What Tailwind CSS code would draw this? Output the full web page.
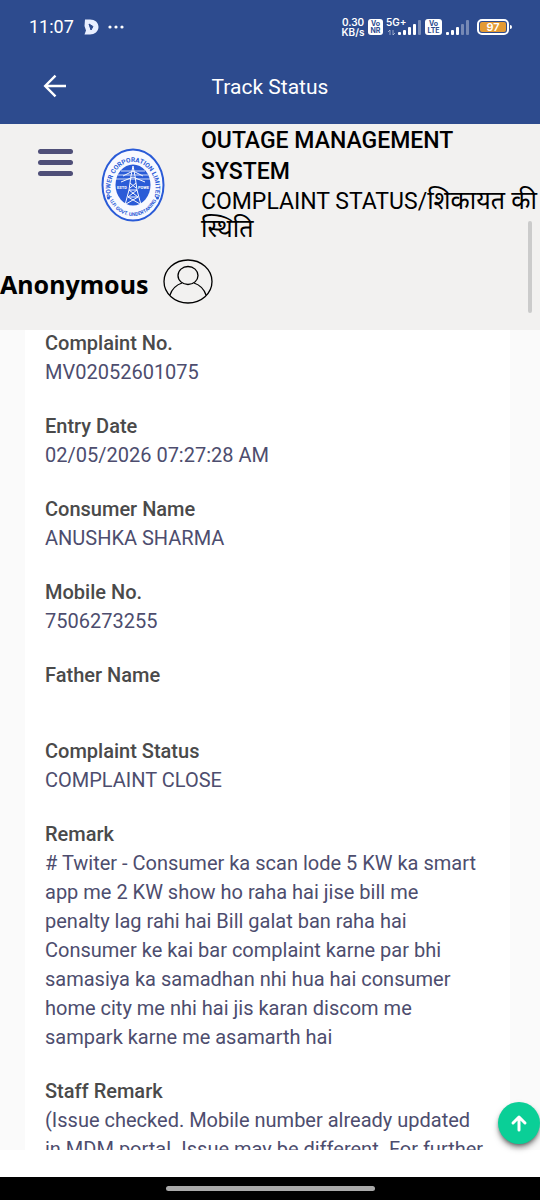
<!DOCTYPE html>
<html lang="en">
<head>
  <meta charset="UTF-8" />
  <meta name="viewport" content="width=device-width, initial-scale=1.0" />
  <title>Track Status</title>
  <script src="https://cdn.jsdelivr.net/npm/@tailwindcss/browser@4"></script>
</head>
<body class="h-screen flex flex-col overflow-hidden bg-white font-['Roboto','Noto_Sans',sans-serif]">

<!-- Phone status bar and app bar -->
<div class="bg-[#2d4b8e] text-white shrink-0">
  <div class="h-[54px] flex items-center pl-[29px] pr-7">
    <span class="text-lg">11:07</span>
    <svg class="ml-[10px] w-[15px] h-4" viewBox="0 0 15 16">
      <path d="M1 .5h5c5 0 8.500 3 8.500 7.500s-4 7.500-8.500 7.500H.5l1.500-4L.5 7z" fill="#e9efff" />
      <path d="M5 5l4 2.500L7 11l-1-3z" fill="#2d4b8e" stroke="#2d4b8e" stroke-linejoin="round" />
    </svg>
    <svg class="ml-2 w-[18px] h-1" viewBox="0 0 18 4" fill="#fff">
      <circle cx="3" cy="2" r="1.6" /><circle cx="9" cy="2" r="1.6" /><circle cx="15" cy="2" r="1.6" />
    </svg>

    <div class="ml-auto flex items-center gap-[3px] font-['Inter',sans-serif]">
      <div class="text-[10px] leading-[10px] font-semibold text-center w-6 whitespace-nowrap">0.30<br />KB/s</div>
      <div class="bg-white text-[#2d4b8e] text-[7px] leading-[7px] font-bold text-center rounded-[3px] w-[15px] h-4 pt-px">Vo<br />NR</div>
      <div class="relative w-9 h-[18px]">
        <span class="absolute left-0 -top-px text-[10px] leading-[10px] font-semibold">5G+</span>
        <svg class="w-9 h-[18px]" viewBox="0 0 36 18" fill="#fff">
          <path d="M4 17v-5l-2 2M7 12v5l2-2" fill="none" stroke="#fff" opacity=".5" />
          <rect x="12" y="14" width="3" height="3" rx="1" />
          <rect x="17" y="12" width="3" height="5" rx="1" />
          <rect x="22" y="9" width="3" height="8" rx="1" />
          <rect x="27" y="6" width="3" height="11" rx="1" />
          <rect x="32" y="2" width="3" height="15" rx="1" opacity=".35" />
        </svg>
      </div>
      <div class="bg-white text-[#2d4b8e] text-[7px] leading-[7px] font-bold text-center rounded-[3px] w-[17px] h-4 pt-px">Vo<br />LTE</div>
      <svg class="ml-px w-6 h-[18px]" viewBox="0 0 24 18" fill="#fff">
        <rect x="0" y="14" width="3" height="3" rx="1" />
        <rect x="5" y="12" width="3" height="5" rx="1" />
        <rect x="10" y="9" width="3" height="8" rx="1" />
        <rect x="15" y="6" width="3" height="11" rx="1" opacity=".35" />
        <rect x="20" y="2" width="3" height="15" rx="1" opacity=".35" />
      </svg>
      <div class="ml-1 flex items-center gap-px">
        <div class="w-8 h-4 rounded-[5px] border-2 border-white p-px">
          <div class="h-full rounded-[2px] bg-[#e39a33] flex items-center justify-center text-[11px] leading-none font-semibold">97</div>
        </div>
        <div class="w-[2px] h-1 bg-white rounded-r"></div>
      </div>
    </div>
  </div>

  <div class="h-[70px] grid grid-cols-[1fr_auto_1fr] items-start pt-4">
    <button aria-label="Back" class="ml-[43px] mt-1 w-6 h-6 justify-self-start">
      <svg class="w-6 h-6" viewBox="0 0 24 24" fill="none" stroke="#fff" stroke-width="2.4">
        <path d="M23 12H3M12.500 1.700L2.200 12l10.300 10.300" />
      </svg>
    </button>
    <h1 class="text-[21px] leading-[34px]">Track Status</h1>
  </div>
</div>

<!-- Site header -->
<header class="h-[206px] shrink-0 bg-[#f2f1f0] text-black">
  <div class="flex items-start pl-[38px]">
    <button aria-label="Menu" class="mt-[25px] w-[35px] flex flex-col gap-[6px] shrink-0">
      <span class="h-[5px] w-full rounded-full bg-[#4f4f78]"></span>
      <span class="h-[5px] w-full rounded-full bg-[#4f4f78]"></span>
      <span class="h-[5px] w-full rounded-full bg-[#4f4f78]"></span>
    </button>
    <svg class="ml-7 mt-6 w-16 h-[74px] shrink-0" viewBox="0 0 64 74" fill="none" stroke="#2a5bd7">
      <defs>
        <path id="ringTop" d="M11 50A22.500 26.500 0 1 1 53 50" />
        <path id="ringBottom" d="M8.500 52A27 31.500 0 0 0 55.500 52" />
      </defs>
      <ellipse cx="32" cy="37" rx="30.500" ry="35.500" fill="#f8f9ff" stroke-width="2" />
      <ellipse cx="32" cy="37" rx="17.500" ry="20.500" fill="#2a5bd7" stroke="none" />
      <g fill="#2a5bd7" stroke="none" font-family="Roboto, sans-serif" font-weight="bold">
        <text font-size="6.5"><textPath href="#ringTop" startOffset="50%" text-anchor="middle">POWER CORPORATION LIMITED</textPath></text>
        <text font-size="5"><textPath href="#ringBottom" startOffset="50%" text-anchor="middle">U.P. GOVT. UNDERTAKING</textPath></text>
        <circle cx="7.500" cy="50" r="1.500" /><circle cx="56.500" cy="50" r="1.500" />
      </g>
      <g stroke="#f8f9ff" stroke-width="1">
        <path d="M20 23h24M17 27h30M15 31h34" stroke-width=".8" />
        <path d="M32 18l-2 10-2 14-4 15M32 18l2 10 2 14 4 15M22 28l10-5 10 5M20 34l12-5 12 5M29 35l6 5M35 35l-6 5M28 42h8M28 42l9 7M36 42l-9 7M27 49h10M27 49l12 7M37 49l-12 7" />
      </g>
      <g fill="#fff" stroke="none" font-family="Roboto, sans-serif" font-weight="bold" font-size="4">
        <text x="16" y="41">ESTD</text><text x="37" y="41">POWE</text>
      </g>
    </svg>
    <div class="ml-9 text-[23px] min-w-0">
      <h2 class="font-medium leading-[31px] pt-px">OUTAGE MANAGEMENT<br />SYSTEM</h2>
      <p class="leading-[27px] whitespace-nowrap">COMPLAINT STATUS/<span class="text-[25px]">शिकायत की<br />स्थिति</span></p>
    </div>
  </div>
  <div class="flex items-center mt-4 gap-[14px]">
    <span class="text-[25px] leading-8 font-bold pt-1 font-['Noto_Sans',sans-serif]">Anonymous</span>
    <svg class="w-[50px] h-[45px]" viewBox="0 0 50 45" fill="none" stroke="#000" stroke-width="1.300">
      <ellipse cx="25" cy="22.500" rx="24" ry="21.500" />
      <ellipse cx="25" cy="16.500" rx="10" ry="9" />
      <path d="M7 36c2-6 6-10 12-12M31 24c6 2 10 6 12 12" />
    </svg>
  </div>
</header>

<!-- Scrolled complaint details -->
<main class="flex-1 min-h-0 overflow-hidden bg-[#fafafa] pl-[25px] pr-[30px]">
  <dl class="min-h-full bg-white pl-5 pr-6 -mt-px flex flex-col gap-[25px] text-xl leading-[29px] text-[#4d4d6e] [&_dt]:font-medium [&_dt]:text-[#4a4a4a]">
    <div><dt>Complaint No.</dt><dd>MV02052601075</dd></div>
    <div><dt>Entry Date</dt><dd>02/05/2026 07:27:28 AM</dd></div>
    <div><dt>Consumer Name</dt><dd>ANUSHKA SHARMA</dd></div>
    <div><dt>Mobile No.</dt><dd>7506273255</dd></div>
    <div><dt>Father Name</dt><dd class="h-[22px]"></dd></div>
    <div><dt>Complaint Status</dt><dd>COMPLAINT CLOSE</dd></div>
    <div>
      <dt>Remark</dt>
      <dd># Twiter - Consumer ka scan lode 5 KW ka smart app me 2 KW show ho raha hai jise bill me penalty lag rahi hai Bill galat ban raha hai Consumer ke kai bar complaint karne par bhi samasiya ka samadhan nhi hua hai consumer home city me nhi hai jis karan discom me sampark karne me asamarth hai</dd>
    </div>
    <div>
      <dt>Staff Remark</dt>
      <dd>(Issue checked. Mobile number already updated in MDM portal. Issue may be different. For further</dd>
    </div>
  </dl>
</main>

<div class="h-[27px] shrink-0 bg-white"></div>
<div class="h-[23px] shrink-0 bg-black flex items-center justify-center">
  <div class="w-[209px] h-[5px] rounded-full bg-[#a9a9a9]"></div>
</div>

<!-- Scroll indicator and back-to-top button -->
<div class="fixed right-[8px] top-[221px] w-1 h-[92px] rounded-full bg-[#cbcbcb]"></div>
<button aria-label="Back to top" class="fixed right-0 bottom-[56px] w-[42px] h-[42px] rounded-full bg-[#0acf97] shadow-md shadow-black/50 flex items-center justify-center">
  <svg class="w-[18px] h-[18px]" viewBox="0 0 18 18" fill="none" stroke="#fff" stroke-width="3" stroke-linecap="round" stroke-linejoin="round">
    <path d="M9 16V3M3 9l6-6 6 6" />
  </svg>
</button>

</body>
</html>
